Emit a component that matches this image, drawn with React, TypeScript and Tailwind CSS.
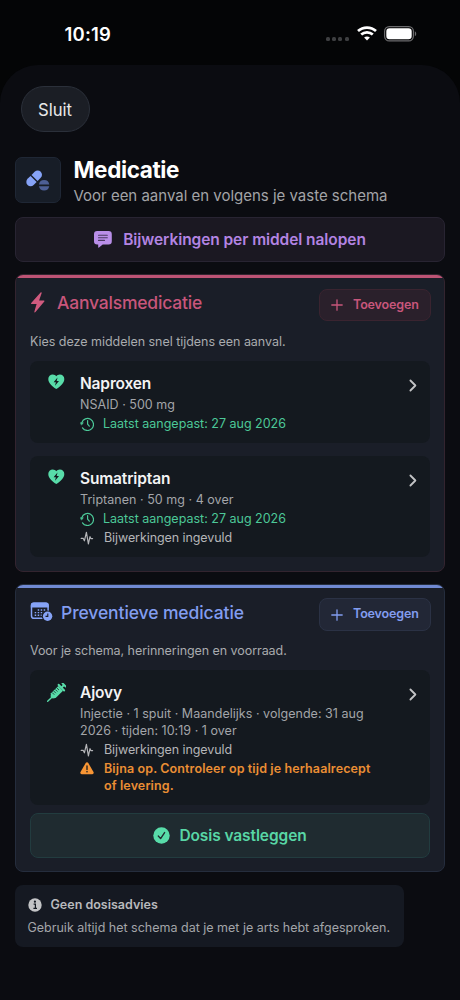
import React from 'react';

interface IconProps {
  className?: string;
}

const WifiIcon = () => (
  <svg width="20" height="15" viewBox="0 0 20 15" fill="none" stroke="#fff" strokeWidth="2.7">
    <path d="M1 5.1C6 .4 14 .4 19 5.1" />
    <path d="M4.2 8.6c3.3-3 8.3-3 11.6 0" />
    <path d="M10 14.6l-2.9-3c1.6-1.5 4.2-1.5 5.8 0z" fill="#fff" stroke="none" />
  </svg>
);

const BatteryIcon = () => (
  <svg width="33" height="16" viewBox="0 0 33 16">
    <rect x=".6" y=".6" width="28.8" height="14.3" rx="4.6" fill="none" stroke="#6b6b6d" strokeWidth="1.2" />
    <rect x="2.3" y="2.3" width="25.4" height="10.9" rx="3.2" fill="#fff" />
    <path d="M30.8 5.3c1.9.7 1.9 4.2 0 4.9z" fill="#6b6b6d" />
  </svg>
);

const PillsIcon = () => (
  <svg width="28" height="24" viewBox="0 0 28 24">
    <g transform="rotate(-45 10 10.5)" fill="#86a3f7">
      <path d="M9.4 6.2H5.2a4.3 4.3 0 0 0 0 8.6h4.2z" />
      <path d="M10.8 6.2h4.4a4.3 4.3 0 0 1 0 8.6h-4.4z" />
    </g>
    <path d="M14.9 16.4a5.3 5.3 0 0 1 10.4 0z" fill="#4d5f96" />
    <path d="M14.9 18.2a5.3 5.3 0 0 0 10.4 0z" fill="#4d5f96" />
  </svg>
);

const BubbleIcon = () => (
  <svg width="18" height="17" viewBox="0 0 18 17">
    <path d="M3.2 0h11.4a3.2 3.2 0 0 1 3.2 3.2v7.1a3.2 3.2 0 0 1-3.2 3.2H8.7L5 16.6c-.4.3-.8.1-.8-.4v-2.7h-1A3.2 3.2 0 0 1 0 10.3V3.2A3.2 3.2 0 0 1 3.2 0z" fill="#b98ee8" />
    <path d="M4.5 4.2h8.8M4.5 6.8h8.8M4.5 9.4h6" stroke="#4a3a60" strokeWidth="1.1" strokeLinecap="round" />
  </svg>
);

const BoltIcon = () => (
  <svg width="16" height="21" viewBox="0 0 15 21">
    <path d="M10.1.5L.7 11c-.4.5-.2 1 .4 1h5L3.9 19.6c-.2.9.5 1.2 1.1.5l8.8-10.600c.4-.5.2-1-.4-1H8.600L11.200 1.100c.2-.8-.6-1.200-1.100-.6z" fill="#d05a7e" />
  </svg>
);

const CalendarClockIcon = () => (
  <svg width="23" height="20" viewBox="0 0 23 20">
    <rect x="1.5" y="1.3" width="16.6" height="15" rx="2.6" fill="none" stroke="#86a3f7" strokeWidth="1.5" />
    <path d="M.8 5.4V3.200A2.600 2.600 0 0 1 3.400.6h12.800a2.600 2.600 0 0 1 2.600 2.600v2.200z" fill="#86a3f7" />
    <path d="M7.7 8h8M4.7 10.6h11M4.7 13.2h7" stroke="#86a3f7" strokeWidth="1.4" strokeDasharray="1.5 1.5" />
    <circle cx="17.6" cy="14.2" r="5.8" fill="#1a1e28" />
    <circle cx="17.6" cy="14.2" r="4.7" fill="#86a3f7" />
    <path d="M17.8 11.5v2.900h-2.300" fill="none" stroke="#1a1e28" strokeWidth="1.1" />
  </svg>
);

const PlusIcon = ({ className }: IconProps) => (
  <svg width="12" height="12" viewBox="0 0 12 12" className={className}>
    <path d="M6 .8v10.4M.8 6h10.4" stroke="currentColor" strokeWidth="1.3" strokeLinecap="round" />
  </svg>
);

const HeartBoltIcon = () => (
  <svg width="17" height="16" viewBox="0 0 17 16">
    <path d="M8.3 15C3.6 12.2.3 8.8.3 5A4.500 4.500 0 0 1 4.800.4c1.500 0 2.700.7 3.500 1.900C9.100 1.100 10.300.4 11.800.4A4.500 4.500 0 0 1 16.300 5c0 3.800-3.300 7.200-8 10z" fill="#58dca9" />
    <path d="M9.5 3.6L5.6 8.3h2.3l-.9 3.500L11 7H8.700z" fill="#14191f" />
  </svg>
);

const SyringeIcon = () => (
  <svg width="20" height="20" viewBox="0 0 20 20">
    <g transform="rotate(45 10 10)" fill="#58dca9">
      <rect x="6.8" y="-2.4" width="6.4" height="1.9" rx=".9" />
      <rect x="9" y="-1.5" width="2" height="4" />
      <rect x="5.1" y="1.4" width="9.8" height="2" rx=".9" />
      <path d="M6.7 3.4h6.6v10.4l-1.9 2.5H8.6l-1.900-2.500z" />
      <rect x="9.3" y="15.5" width="1.4" height="7" rx=".7" />
      <path d="M7 5.8h3M7 8h3M7 10.2h3M7 12.4h3" stroke="#14191f" strokeWidth=".7" />
    </g>
  </svg>
);

const HistoryIcon = () => (
  <svg width="14" height="14" viewBox="0 0 14 14" fill="none" stroke="#4cc898" strokeWidth="1.2" strokeLinecap="round" strokeLinejoin="round">
    <path d="M1.8 5.6A6 6 0 1 1 2.5 10.8" />
    <path d="M7.6 3.6v3.6l1.7 2" />
    <path d="M.5 5.7h2.9L1.7 7.900z" fill="#4cc898" strokeWidth=".5" />
  </svg>
);

const PulseIcon = () => (
  <svg width="14" height="14" viewBox="0 0 14 14" fill="none" stroke="#b4b5b8" strokeWidth="1.2" strokeLinecap="round" strokeLinejoin="round">
    <path d="M1.2 7.4h2.1l1.1 2.4L6.400 1.300l2 11.600 1.600-7.200.9 1.900h1.700" />
  </svg>
);

const WarningIcon = () => (
  <svg width="14" height="13" viewBox="0 0 14 13">
    <path d="M5.7.9a1.500 1.500 0 0 1 2.600 0l5.200 9.200a1.500 1.500 0 0 1-1.300 2.200H1.800A1.500 1.500 0 0 1 .5 10.100z" fill="#f79534" />
    <path d="M7 4v3.600" stroke="#14191f" strokeWidth="1.3" strokeLinecap="round" />
    <circle cx="7" cy="9.8" r=".8" fill="#14191f" />
  </svg>
);

const CheckCircleIcon = () => (
  <svg width="17" height="17" viewBox="0 0 17 17">
    <circle cx="8.5" cy="8.5" r="8.2" fill="#58dca9" />
    <path d="M5.3 9l2.3 2.600 4-6" fill="none" stroke="#202c31" strokeWidth="1.4" strokeLinecap="round" strokeLinejoin="round" />
  </svg>
);

const InfoIcon = () => (
  <svg width="14" height="14" viewBox="0 0 14 14">
    <circle cx="7" cy="7" r="6.7" fill="#c3c4c6" />
    <circle cx="6.9" cy="3.7" r="1.1" fill="#151a22" />
    <path d="M5.6 6.2h1.800v4M5.400 10.300h3.600" fill="none" stroke="#151a22" strokeWidth="1.2" />
  </svg>
);

const ChevronIcon = () => (
  <svg width="8" height="13" viewBox="0 0 8 13" className="absolute right-[13px] top-[18px]">
    <path d="M1.4 1.500l5 5-5 5" fill="none" stroke="#c3c4c6" strokeWidth="1.8" strokeLinecap="round" strokeLinejoin="round" />
  </svg>
);

interface MedicationItemProps {
  name: string;
  icon: React.ReactNode;
  details: string[];
  className: string;
  children: React.ReactNode;
}

const MedicationItem: React.FC<MedicationItemProps> = ({ name, icon, details, className, children }) => (
  <div className={`relative flex rounded-lg bg-[#14191f] pt-[13px] ${className}`}>
    <div className="flex w-[50px] shrink-0 justify-center pl-[2px]">{icon}</div>
    <div>
      <h3 className="h-[21px] text-[15.5px] font-semibold leading-[20px] tracking-[-0.15px] text-[#f3f3f4]">{name}</h3>
      <div className="pt-[2px] text-[12.5px] leading-[16.5px] tracking-[0.03px] text-[#a3a5a9]">
        {details.map((line) => (
          <p key={line}>{line}</p>
        ))}
      </div>
      {children}
    </div>
    <ChevronIcon />
  </div>
);

const LastChanged = () => (
  <div className="flex h-[19px] items-center gap-[9px] pt-[2px] text-[12.5px] leading-[16px] text-[#4cc898]">
    <HistoryIcon />
    <span>Laatst aangepast: 27 aug 2026</span>
  </div>
);

const SideEffects = () => (
  <div className="flex h-[19px] items-center gap-[10px] pt-[2px] text-[12.5px] leading-[16px] tracking-[-0.08px] text-[#b4b5b8]">
    <PulseIcon />
    <span>Bijwerkingen ingevuld</span>
  </div>
);

const App: React.FC = () => {
  return (
    <div className="flex h-[1000px] w-[460px] flex-col overflow-hidden whitespace-nowrap bg-[#040506] font-['Inter',sans-serif]">
      <div className="flex h-[65px] shrink-0 items-start justify-between pl-[64.5px] pr-[43px]">
        <span className="pt-[22px] text-[18.5px] font-semibold leading-[25px] tracking-[0.2px] text-white">10:19</span>
        <div className="flex pt-[26px]">
          <div className="mr-[8px] flex gap-[2.3px] pt-[11px]">
            {[0, 1, 2, 3].map((dot) => (
              <span key={dot} className="h-[4px] w-[4px] rounded-[1.5px] bg-[#3e3f41]" />
            ))}
          </div>
          <WifiIcon />
          <div className="ml-[7.5px]">
            <BatteryIcon />
          </div>
        </div>
      </div>

      <div className="flex-1 rounded-t-[38px] bg-[#0b0c11] px-[15px] pt-[21px]">
        <button className="ml-[6px] flex h-[46px] w-[69px] items-center justify-center rounded-full border border-[#2b303a] bg-[#1b1e25] pr-px pt-[3px] text-[16.7px] text-[#e8e8e9]">
          Sluit
        </button>

        <div className="mt-[25px] flex h-[46px] gap-[12.5px]">
          <div className="flex h-[46px] w-[46px] items-center justify-center rounded-[7px] border border-[#1f2735] bg-[#171d27]">
            <PillsIcon />
          </div>
          <div>
            <h1 className="text-[22.5px] font-bold leading-[26px] tracking-[-0.37px] text-white">Medicatie</h1>
            <p className="pt-[1px] text-[15px] leading-[24px] tracking-[-0.01px] text-[#a3a4a7]">Voor een aanval en volgens je vaste schema</p>
          </div>
        </div>

        <button className="mt-[14px] flex h-[45px] w-full items-center justify-center gap-[11px] rounded-lg border border-[#282432] bg-[#1b1822] text-[15.5px] font-semibold tracking-[-0.07px] text-[#b384e2]">
          <BubbleIcon />
          <span>Bijwerkingen per middel nalopen</span>
        </button>

        <section className="relative mt-[12px] h-[298px] overflow-hidden rounded-lg border border-[#33242f] bg-[#1a1e28] px-[14px] pt-[14px]">
          <div className="absolute -left-px -right-px -top-px h-[4px] bg-[#bd5374]" />
          <div className="flex h-[32px] justify-between">
            <div className="flex items-start gap-[11px] pt-[3px]">
              <BoltIcon />
              <h2 className="text-[17.5px] font-medium leading-[21px] tracking-[-0.2px] text-[#c8567b]">Aanvalsmedicatie</h2>
            </div>
            <button className="-mr-px flex h-[32px] w-[112px] items-center gap-[10px] rounded-lg border border-[#3a2430] bg-[#2a202b] pl-[11px] text-[12.5px] font-semibold tracking-[-0.15px] text-[#c8567b]">
              <PlusIcon />
              <span>Toevoegen</span>
            </button>
          </div>
          <p className="mt-[13px] text-[12.5px] leading-[16px] tracking-[-0.03px] text-[#a9abae]">Kies deze middelen snel tijdens een aanval.</p>
          <MedicationItem name="Naproxen" icon={<HeartBoltIcon />} details={['NSAID · 500 mg']} className="mt-[11px] h-[82px]">
            <LastChanged />
          </MedicationItem>
          <MedicationItem name="Sumatriptan" icon={<HeartBoltIcon />} details={['Triptanen · 50 mg · 4 over']} className="mt-[13px] h-[101px]">
            <LastChanged />
            <SideEffects />
          </MedicationItem>
        </section>

        <section className="relative mt-[12px] h-[288px] overflow-hidden rounded-lg border border-[#252d3d] bg-[#1a1e28] px-[14px] pt-[13px]">
          <div className="absolute -left-px -right-px -top-px h-[4px] bg-[#7089d2]" />
          <div className="flex h-[32px] justify-between">
            <div className="flex items-start gap-[8px] pt-[4px]">
              <CalendarClockIcon />
              <h2 className="text-[17.5px] font-medium leading-[21px] tracking-[-0.1px] text-[#829df0]">Preventieve medicatie</h2>
            </div>
            <button className="-mr-px flex h-[33px] w-[112px] items-center gap-[10px] rounded-lg border border-[#2b3245] bg-[#222736] pl-[11px] text-[12.5px] font-semibold tracking-[-0.15px] text-[#829df0]">
              <PlusIcon />
              <span>Toevoegen</span>
            </button>
          </div>
          <p className="mt-[13px] text-[12.5px] leading-[16px] tracking-[-0.06px] text-[#a9abae]">Voor je schema, herinneringen en voorraad.</p>
          <MedicationItem
            name="Ajovy"
            icon={<SyringeIcon />}
            details={['Injectie · 1 spuit · Maandelijks · volgende: 31 aug', '2026 · tijden: 10:19 · 1 over']}
            className="mt-[11px] h-[135px]"
          >
            <SideEffects />
            <div className="flex gap-[10px] pt-[3px] text-[12.5px] font-semibold leading-[16.5px] tracking-[0.12px] text-[#eb8e34]">
              <div className="pt-[1px]">
                <WarningIcon />
              </div>
              <p>
                Bijna op. Controleer op tijd je herhaalrecept
                <br />
                of levering.
              </p>
            </div>
          </MedicationItem>
          <button className="mt-[8px] flex h-[45px] w-full items-center justify-center gap-[9px] rounded-lg border border-[#223c3f] bg-[#1f2b30] text-[15.5px] font-semibold tracking-[-0.1px] text-[#58d6a5]">
            <CheckCircleIcon />
            <span>Dosis vastleggen</span>
          </button>
        </section>

        <div className="mt-[13px] h-[62px] w-[389px] rounded-lg bg-[#151922] pl-[12.5px] pt-[12px]">
          <div className="flex h-[16px] items-center gap-[9px] text-[12.5px] font-semibold text-[#b9babd]">
            <InfoIcon />
            <span>Geen dosisadvies</span>
          </div>
          <p className="mt-[7px] text-[12.5px] leading-[16px] text-[#a3a5a9]">Gebruik altijd het schema dat je met je arts hebt afgesproken.</p>
        </div>
      </div>
    </div>
  );
};

export default App;
